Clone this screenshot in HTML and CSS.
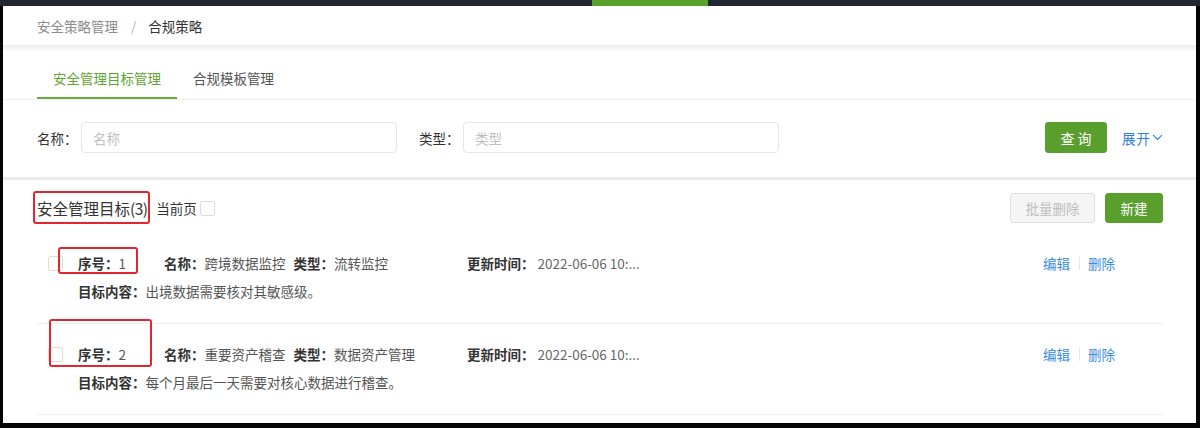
FILE: index.html
```html
<!DOCTYPE html>
<html lang="zh-CN">
<head>
<meta charset="utf-8">
<title>合规策略</title>
<link rel="stylesheet" href="styles.css">
</head>
<body>
<div class="frame">
  <div class="topbar"><span class="topbar-active"></span></div>
  <div class="main">
    <div class="breadcrumb">
      <span class="crumb">安全策略管理</span>
      <span class="crumb-sep">/</span>
      <span class="crumb current">合规策略</span>
    </div>
    <div class="shade"></div>
    <div class="tabs">
      <div class="tab active">安全管理目标管理</div>
      <div class="tab">合规模板管理</div>
    </div>
    <div class="search">
      <label class="field">
        <span class="field-label">名称：</span>
        <input class="input" placeholder="名称">
      </label>
      <label class="field field-type">
        <span class="field-label">类型：</span>
        <input class="input" placeholder="类型">
      </label>
      <div class="search-actions">
        <button class="btn btn-primary btn-query">查 询</button>
        <a class="expand">展开<svg class="chev" viewBox="0 0 12 8" width="11" height="7"><path d="M1 1.2 L6 6.3 L11 1.2" fill="none" stroke="currentColor" stroke-width="1.3"/></svg></a>
      </div>
    </div>
    <div class="divider"></div>
    <div class="list-head">
      <span class="mark mark-head"></span>
      <div class="list-title-wrap">
        <span class="list-title">安全管理目标<span class="count">(3)</span></span>
        <span class="page-check">当前页<span class="checkbox"></span></span>
      </div>
      <div class="list-buttons">
        <button class="btn btn-disabled">批量删除</button>
        <button class="btn btn-primary btn-new">新建</button>
      </div>
    </div>
    <div class="rows">
      <div class="row">
        <span class="mark mark-r1"></span>
        <div class="row-check"><span class="checkbox"></span></div>
        <div class="row-body">
          <div class="line">
            <div class="col-no"><b>序号：</b><span class="val">1</span></div>
            <div class="col-name"><b>名称：</b><span class="val">跨境数据监控</span><b class="type-label">类型：</b><span class="val">流转监控</span></div>
            <div class="col-time"><b>更新时间：</b><span class="val date">2022-06-06 10:...</span></div>
            <div class="col-actions"><a class="link">编辑</a><span class="vsep"></span><a class="link">删除</a></div>
          </div>
          <div class="line"><b>目标内容：</b><span class="val">出境数据需要核对其敏感级。</span></div>
        </div>
      </div>
      <div class="row">
        <span class="mark mark-r2"></span>
        <div class="row-check"><span class="checkbox"></span></div>
        <div class="row-body">
          <div class="line">
            <div class="col-no"><b>序号：</b><span class="val">2</span></div>
            <div class="col-name"><b>名称：</b><span class="val">重要资产稽查</span><b class="type-label">类型：</b><span class="val">数据资产管理</span></div>
            <div class="col-time"><b>更新时间：</b><span class="val date">2022-06-06 10:...</span></div>
            <div class="col-actions"><a class="link">编辑</a><span class="vsep"></span><a class="link">删除</a></div>
          </div>
          <div class="line"><b>目标内容：</b><span class="val">每个月最后一天需要对核心数据进行稽查。</span></div>
        </div>
      </div>
    </div>
  </div>
</div>
</body>
</html>
```

FILE: styles.css
```css
* { box-sizing: border-box; }
html, body { margin: 0; padding: 0; }
body {
  background: #050505;
  font-family: "Noto Sans CJK SC", "Microsoft YaHei", sans-serif;
  font-size: 13.5px;
  color: #333;
}
.frame {
  width: 1200px;
  height: 428px;
  display: flex;
  flex-direction: column;
  overflow: hidden;
}
.topbar {
  height: 6px;
  flex: none;
  background: #222831;
  padding-left: 592px;
  display: flex;
}
.topbar-active {
  width: 116px;
  height: 6px;
  background: #5aa22c;
}
.main {
  flex: 1;
  margin: 0 4px 5px 3px;
  background: #fff;
  overflow: hidden;
  display: flex;
  flex-direction: column;
}
.breadcrumb {
  height: 39px;
  flex: none;
  display: flex;
  align-items: center;
  padding-left: 34px;
}
.crumb { color: #8c8c8c; }
.crumb.current { color: #333; }
.crumb-sep { color: #b5b5b5; margin: 0 12px 0 13px; }
.shade {
  height: 6px;
  flex: none;
  background: linear-gradient(#eeeeee, #fbfbfb);
}
.tabs {
  display: flex;
  padding-left: 34px;
  border-bottom: 1px solid #f0f0f0;
  flex: none;
}
.tab {
  height: 48px;
  padding: 8px 16px 0;
  border-bottom: 2px solid transparent;
  display: flex;
  align-items: center;
  color: #555;
}
.tab.active {
  color: #5fa532;
  border-bottom-color: #67ad3b;
}
.search {
  flex: none;
  display: flex;
  align-items: center;
  padding: 22px 33px 24px 34px;
}
.field { display: flex; align-items: center; }
.field-label { width: 44px; color: #333; }
.field-type { margin-left: 22px; }
.input {
  width: 316px;
  height: 31px;
  border: 1px solid #e6e6e6;
  border-radius: 4px;
  padding: 0 11px;
  font: inherit;
  color: #333;
  outline: none;
}
.input::placeholder { color: #c0c0c0; }
.search-actions {
  margin-left: auto;
  display: flex;
  align-items: center;
}
.btn {
  font: inherit;
  height: 30px;
  border-radius: 3px;
  border: 1px solid transparent;
  padding: 0;
  cursor: pointer;
}
.btn-primary {
  background: #5a9f2e;
  color: #fff;
  border-color: #5a9f2e;
}
.btn-query { width: 62px; height: 31px; font-size: 14px; }
.expand {
  color: #2f7de1;
  margin-left: 15px;
  display: flex;
  align-items: center;
  letter-spacing: 1px;
}
.chev { margin-left: 1px; }
.divider {
  height: 3px;
  flex: none;
  background: #ebebeb;
}
.list-head {
  position: relative;
  flex: none;
  display: flex;
  align-items: center;
  justify-content: space-between;
  padding: 13px 33px 10px 34px;
}
.list-title-wrap {
  display: flex;
  align-items: center;
}
.list-title { font-size: 15.5px; color: #333; }
.count { letter-spacing: -0.6px; }
.page-check {
  display: flex;
  align-items: center;
  margin-left: 9px;
  color: #333;
}
.checkbox {
  display: inline-block;
  width: 15px;
  height: 15px;
  border: 1px solid #dcdcdc;
  border-radius: 2px;
  background: #fff;
}
.page-check .checkbox { margin-left: 3px; }
.list-buttons { display: flex; gap: 10px; }
.btn-disabled {
  width: 85px;
  background: #f5f5f5;
  border-color: #e0e0e0;
  color: #bdbdbd;
}
.btn-new { width: 58px; }
.rows {
  margin: 0 33px 0 34px;
}
.row {
  position: relative;
  display: flex;
  padding: 16px 0 18px;
  border-bottom: 1px solid #f0f0f0;
}
.row-check {
  width: 15px;
  height: 28px;
  margin: 0 15px 0 11px;
  display: flex;
  align-items: center;
}
.row-body { flex: 1; }
.line {
  height: 28px;
  display: flex;
  align-items: center;
  white-space: nowrap;
}
.line b { font-weight: 700; color: #333; }
.val { color: #555; }
.date { color: #666; margin-left: 3px; }
.col-no { width: 86px; }
.col-name { width: 303px; }
.type-label { margin-left: 8px; }
.col-time { flex: 1; }
.col-actions {
  width: 120px;
  display: flex;
  align-items: center;
}
.link { color: #3b8de0; cursor: pointer; }
.vsep {
  width: 1px;
  height: 13px;
  background: #e6e6e6;
  margin: 0 8px 0 9px;
}
.mark {
  position: absolute;
  border: 2px solid #e2262b;
  border-radius: 3px;
  pointer-events: none;
}
.mark-head { left: 30px; top: 11px; width: 117px; height: 33px; }
.mark-r1 { left: 21px; top: 14px; width: 80px; height: 27px; }
.mark-r2 { left: 12px; top: -5px; width: 103px; height: 48px; }
```
